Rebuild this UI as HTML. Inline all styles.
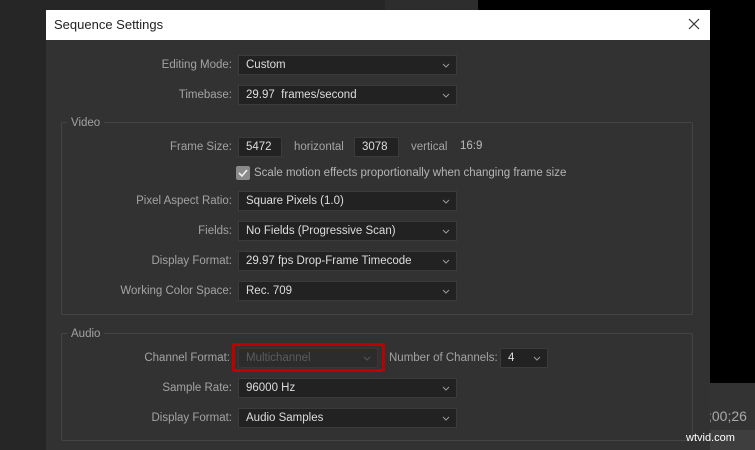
<!DOCTYPE html>
<html><head><style>
*{margin:0;padding:0;box-sizing:border-box}
body{width:755px;height:450px;overflow:hidden;background:#262626;position:relative;font-family:"Liberation Sans",sans-serif;font-size:11.5px}
.a{position:absolute}
#dlg{left:46px;top:10px;width:664px;height:440px;background:#323232}
#title{left:46px;top:10px;width:664px;height:30px;background:#fff;color:#222;font-size:13px;line-height:30px;padding-left:8px}
.lab{position:absolute;color:#a3a3a3;text-align:right;width:200px;line-height:21px}
.dd{position:absolute;background:#222;border:1px solid #3b3b3b;color:#ddd;line-height:19px;padding-left:7px;height:20px}
.dd svg{position:absolute;right:6px;top:7px}
.grp{position:absolute;border:1px solid #444;border-radius:2px}
.gl{position:absolute;background:#323232;color:#a3a3a3;padding:0 4px;line-height:14px}
.t{position:absolute;color:#a3a3a3;line-height:21px}
</style></head><body>
<div class="a" style="left:385px;top:0;width:93px;height:10px;background:#2d2d2d"></div>
<div class="a" style="left:478px;top:0;width:277px;height:10px;background:#000"></div>
<div class="a" style="left:710px;top:0;width:45px;height:383px;background:#000"></div>
<div class="a" style="left:710px;top:383px;width:45px;height:47px;background:#333"></div>
<div class="a" style="left:710px;top:430px;width:45px;height:20px;background:#3e3e3e"></div>
<div class="a" style="left:708px;top:408px;color:#aaa;font-size:14px">;00;26</div>
<div class="a" id="dlg"></div>
<div class="a" id="title">Sequence Settings</div>
<svg class="a" style="left:688px;top:18px" width="12" height="12"><path d="M1 1L11 11M11 1L1 11" stroke="#333" stroke-width="1.2"/></svg>

<div class="lab" style="left:32px;top:55px">Editing Mode:</div>
<div class="dd" style="left:238px;top:55px;width:219px">Custom<svg width="8" height="5"><path d="M1 1L4 4L7 1" stroke="#999" fill="none"/></svg></div>
<div class="lab" style="left:32px;top:85px">Timebase:</div>
<div class="dd" style="left:238px;top:85px;width:219px">29.97&nbsp; frames/second<svg width="8" height="5"><path d="M1 1L4 4L7 1" stroke="#999" fill="none"/></svg></div>

<div class="grp" style="left:61px;top:122px;width:632px;height:193px"></div>
<div class="gl" style="left:67px;top:116px">Video</div>
<div class="lab" style="left:32px;top:137px">Frame Size:</div>
<div class="dd" style="left:238px;top:137px;width:44px">5472</div>
<div class="t" style="left:294px;top:137px">horizontal</div>
<div class="dd" style="left:354px;top:137px;width:45px">3078</div>
<div class="t" style="left:411px;top:137px">vertical</div>
<div class="t" style="left:460px;top:136px;color:#bbb">16:9</div>
<div class="a" style="left:236px;top:166px;width:14px;height:14px;background:#8a8a8a;border-radius:2px"><svg width="14" height="14"><path d="M3 7L6 10L11 4" stroke="#eee" stroke-width="1.6" fill="none"/></svg></div>
<div class="t" style="left:254px;top:163px;color:#b5b5b5">Scale motion effects proportionally when changing frame size</div>
<div class="lab" style="left:32px;top:191px">Pixel Aspect Ratio:</div>
<div class="dd" style="left:238px;top:191px;width:219px">Square Pixels (1.0)<svg width="8" height="5"><path d="M1 1L4 4L7 1" stroke="#999" fill="none"/></svg></div>
<div class="lab" style="left:32px;top:221px">Fields:</div>
<div class="dd" style="left:238px;top:221px;width:219px">No Fields (Progressive Scan)<svg width="8" height="5"><path d="M1 1L4 4L7 1" stroke="#999" fill="none"/></svg></div>
<div class="lab" style="left:32px;top:251px">Display Format:</div>
<div class="dd" style="left:238px;top:251px;width:219px">29.97 fps Drop-Frame Timecode<svg width="8" height="5"><path d="M1 1L4 4L7 1" stroke="#999" fill="none"/></svg></div>
<div class="lab" style="left:32px;top:281px">Working Color Space:</div>
<div class="dd" style="left:238px;top:281px;width:219px">Rec. 709<svg width="8" height="5"><path d="M1 1L4 4L7 1" stroke="#999" fill="none"/></svg></div>

<div class="grp" style="left:61px;top:333px;width:632px;height:108px"></div>
<div class="gl" style="left:67px;top:327px">Audio</div>
<div class="lab" style="left:30px;top:348px">Channel Format:</div>
<div class="dd" style="left:238px;top:348px;width:140px;background:#2c2c2c;color:#5c5c5c;border-color:#383838">Multichannel<svg width="8" height="5"><path d="M1 1L4 4L7 1" stroke="#555" fill="none"/></svg></div>
<div class="a" style="left:232px;top:343px;width:153px;height:29px;border:3px solid #c00000;border-radius:2px"></div>
<div class="t" style="left:389px;top:348px">Number of Channels:</div>
<div class="dd" style="left:500px;top:348px;width:48px">4<svg width="8" height="5"><path d="M1 1L4 4L7 1" stroke="#999" fill="none"/></svg></div>
<div class="lab" style="left:32px;top:378px">Sample Rate:</div>
<div class="dd" style="left:238px;top:378px;width:219px">96000 Hz<svg width="8" height="5"><path d="M1 1L4 4L7 1" stroke="#999" fill="none"/></svg></div>
<div class="lab" style="left:32px;top:408px">Display Format:</div>
<div class="dd" style="left:238px;top:408px;width:219px">Audio Samples<svg width="8" height="5"><path d="M1 1L4 4L7 1" stroke="#999" fill="none"/></svg></div>
<div class="a" style="left:686px;top:432px;color:#fff;font-size:11px">wtvid.com</div>
</body></html>
